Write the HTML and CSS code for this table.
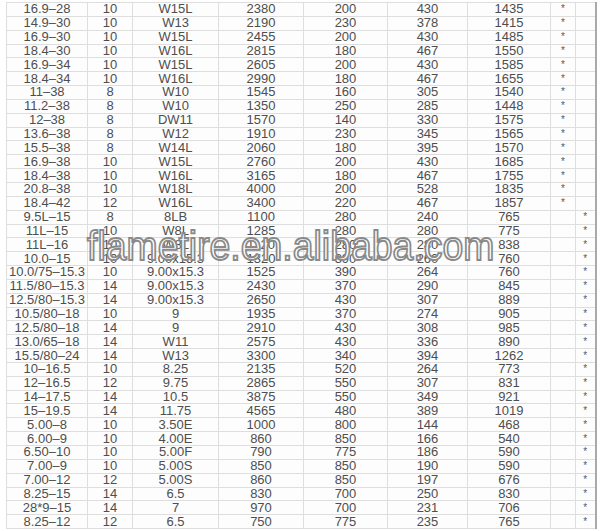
FILE: index.html
```html
<!DOCTYPE html>
<html>
<head>
<meta charset="utf-8">
<link rel="stylesheet" href="styles.css">
</head>
<body>
<div class="sheet">
<table class="grid">
<colgroup>
<col class="c1"><col class="c2"><col class="c3"><col class="c4"><col class="c5"><col class="c6"><col class="c7"><col class="c8"><col class="c9">
</colgroup>
<tbody>
<tr><td>16.9–28</td><td>10</td><td>W15L</td><td>2380</td><td>200</td><td>430</td><td>1435</td><td class="st">*</td><td></td></tr>
<tr><td>14.9–30</td><td>10</td><td>W13</td><td>2190</td><td>230</td><td>378</td><td>1415</td><td class="st">*</td><td></td></tr>
<tr><td>16.9–30</td><td>10</td><td>W15L</td><td>2455</td><td>200</td><td>430</td><td>1485</td><td class="st">*</td><td></td></tr>
<tr><td>18.4–30</td><td>10</td><td>W16L</td><td>2815</td><td>180</td><td>467</td><td>1550</td><td class="st">*</td><td></td></tr>
<tr><td>16.9–34</td><td>10</td><td>W15L</td><td>2605</td><td>200</td><td>430</td><td>1585</td><td class="st">*</td><td></td></tr>
<tr><td>18.4–34</td><td>10</td><td>W16L</td><td>2990</td><td>180</td><td>467</td><td>1655</td><td class="st">*</td><td></td></tr>
<tr><td>11–38</td><td>8</td><td>W10</td><td>1545</td><td>160</td><td>305</td><td>1540</td><td class="st">*</td><td></td></tr>
<tr><td>11.2–38</td><td>8</td><td>W10</td><td>1350</td><td>250</td><td>285</td><td>1448</td><td class="st">*</td><td></td></tr>
<tr><td>12–38</td><td>8</td><td>DW11</td><td>1570</td><td>140</td><td>330</td><td>1575</td><td class="st">*</td><td></td></tr>
<tr><td>13.6–38</td><td>8</td><td>W12</td><td>1910</td><td>230</td><td>345</td><td>1565</td><td class="st">*</td><td></td></tr>
<tr><td>15.5–38</td><td>8</td><td>W14L</td><td>2060</td><td>180</td><td>395</td><td>1570</td><td class="st">*</td><td></td></tr>
<tr><td>16.9–38</td><td>10</td><td>W15L</td><td>2760</td><td>200</td><td>430</td><td>1685</td><td class="st">*</td><td></td></tr>
<tr><td>18.4–38</td><td>10</td><td>W16L</td><td>3165</td><td>180</td><td>467</td><td>1755</td><td class="st">*</td><td></td></tr>
<tr><td>20.8–38</td><td>10</td><td>W18L</td><td>4000</td><td>200</td><td>528</td><td>1835</td><td class="st">*</td><td></td></tr>
<tr><td>18.4–42</td><td>12</td><td>W16L</td><td>3400</td><td>220</td><td>467</td><td>1857</td><td class="st">*</td><td></td></tr>
<tr><td>9.5L–15</td><td>8</td><td>8LB</td><td>1100</td><td>280</td><td>240</td><td>765</td><td></td><td class="st">*</td></tr>
<tr><td>11L–15</td><td>10</td><td>W8L</td><td>1285</td><td>280</td><td>280</td><td>775</td><td></td><td class="st">*</td></tr>
<tr><td>11L–16</td><td>10</td><td>W8L</td><td>1120</td><td>280</td><td>280</td><td>838</td><td></td><td class="st">*</td></tr>
<tr><td>10.0–15</td><td>10</td><td>9.00x15.3</td><td>1320</td><td>390</td><td>260</td><td>760</td><td></td><td class="st">*</td></tr>
<tr><td>10.0/75–15.3</td><td>10</td><td>9.00x15.3</td><td>1525</td><td>390</td><td>264</td><td>760</td><td></td><td class="st">*</td></tr>
<tr><td>11.5/80–15.3</td><td>14</td><td>9.00x15.3</td><td>2430</td><td>370</td><td>290</td><td>845</td><td></td><td class="st">*</td></tr>
<tr><td>12.5/80–15.3</td><td>14</td><td>9.00x15.3</td><td>2650</td><td>430</td><td>307</td><td>889</td><td></td><td class="st">*</td></tr>
<tr><td>10.5/80–18</td><td>10</td><td>9</td><td>1935</td><td>370</td><td>274</td><td>905</td><td></td><td class="st">*</td></tr>
<tr><td>12.5/80–18</td><td>14</td><td>9</td><td>2910</td><td>430</td><td>308</td><td>985</td><td></td><td class="st">*</td></tr>
<tr><td>13.0/65–18</td><td>14</td><td>W11</td><td>2575</td><td>430</td><td>336</td><td>890</td><td></td><td class="st">*</td></tr>
<tr><td>15.5/80–24</td><td>14</td><td>W13</td><td>3300</td><td>340</td><td>394</td><td>1262</td><td></td><td class="st">*</td></tr>
<tr><td>10–16.5</td><td>10</td><td>8.25</td><td>2135</td><td>520</td><td>264</td><td>773</td><td></td><td class="st">*</td></tr>
<tr><td>12–16.5</td><td>12</td><td>9.75</td><td>2865</td><td>550</td><td>307</td><td>831</td><td></td><td class="st">*</td></tr>
<tr><td>14–17.5</td><td>14</td><td>10.5</td><td>3875</td><td>550</td><td>349</td><td>921</td><td></td><td class="st">*</td></tr>
<tr><td>15–19.5</td><td>14</td><td>11.75</td><td>4565</td><td>480</td><td>389</td><td>1019</td><td></td><td class="st">*</td></tr>
<tr><td>5.00–8</td><td>10</td><td>3.50E</td><td>1000</td><td>800</td><td>144</td><td>468</td><td></td><td class="st">*</td></tr>
<tr><td>6.00–9</td><td>10</td><td>4.00E</td><td>860</td><td>850</td><td>166</td><td>540</td><td></td><td class="st">*</td></tr>
<tr><td>6.50–10</td><td>10</td><td>5.00F</td><td>790</td><td>775</td><td>186</td><td>590</td><td></td><td class="st">*</td></tr>
<tr><td>7.00–9</td><td>10</td><td>5.00S</td><td>850</td><td>850</td><td>190</td><td>590</td><td></td><td class="st">*</td></tr>
<tr><td>7.00–12</td><td>12</td><td>5.00S</td><td>860</td><td>850</td><td>197</td><td>676</td><td></td><td class="st">*</td></tr>
<tr><td>8.25–15</td><td>14</td><td>6.5</td><td>830</td><td>700</td><td>250</td><td>830</td><td></td><td class="st">*</td></tr>
<tr><td>28*9–15</td><td>14</td><td>7</td><td>970</td><td>700</td><td>231</td><td>706</td><td></td><td class="st">*</td></tr>
<tr><td>8.25–12</td><td>12</td><td>6.5</td><td>750</td><td>775</td><td>235</td><td>765</td><td></td><td class="st">*</td></tr>
</tbody>
</table>
<div class="watermark">flametire.en.alibaba.com</div>
</div>
</body>
</html>
```
FILE: styles.css
```css
html, body {
  margin: 0;
  padding: 0;
  background: #ffffff;
}
body {
  width: 600px;
  height: 531px;
  overflow: hidden;
  font-family: "Liberation Sans", Arial, sans-serif;
}
.sheet {
  position: relative;
  padding: 2px 0 0 6px;
}
.grid {
  border-collapse: collapse;
  table-layout: fixed;
  width: 589px;
  background: #fdfdfd;
  border-left: 1px solid #b5b5b5;
  border-right: 2px solid #a9a9a9;
  border-bottom: 1px solid #b8b8b8;
}
.c1 { width: 81px; }
.c2 { width: 45px; }
.c3 { width: 86px; }
.c4 { width: 85px; }
.c5 { width: 84px; }
.c6 { width: 80px; }
.c7 { width: 83px; }
.c8 { width: 25px; }
.c9 { width: 20px; }
.grid td {
  height: 12.85px;
  padding: 0;
  border: 1px solid #dedede;
  text-align: center;
  vertical-align: middle;
  font-size: 13px;
  line-height: 12px;
  color: #4e4e4e;
  white-space: nowrap;
  overflow: hidden;
}
.grid td.st {
  font-size: 10px;
  color: #5a5a5a;
}
.watermark {
  position: absolute;
  left: 87px;
  top: 226px;
  font-family: "Liberation Sans", Arial, sans-serif;
  font-size: 37.4px;
  line-height: 37px;
  color: #ffffff;
  -webkit-text-stroke: 1.7px #8a8a8a;
  transform: scaleY(1.1);
  transform-origin: left top;
  white-space: nowrap;
}
```
